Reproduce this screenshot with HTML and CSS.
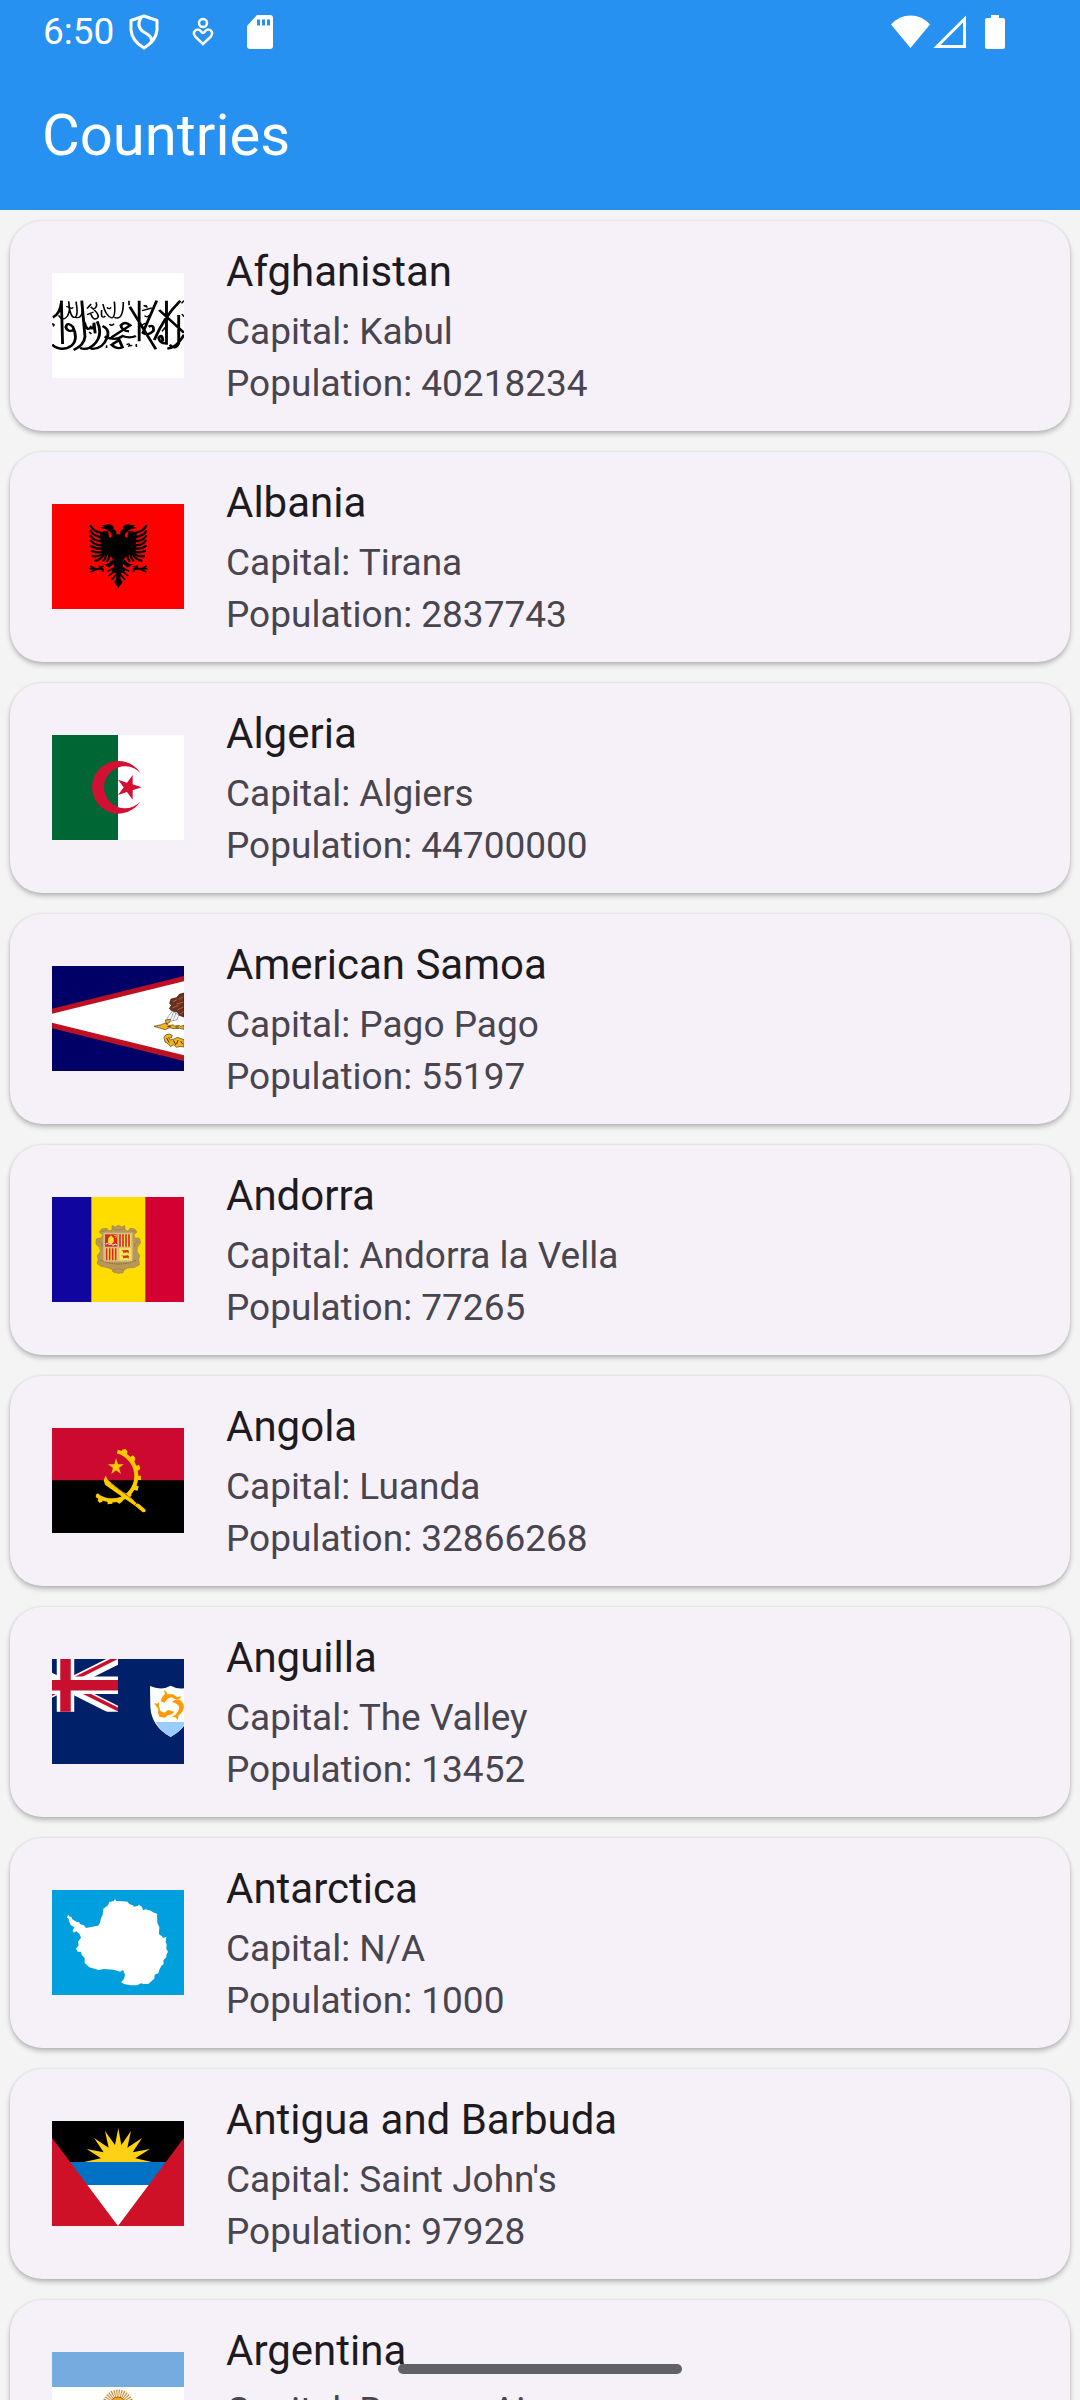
FILE: index.html
```html
<!DOCTYPE html>
<html lang="en">
<head>
<meta charset="utf-8">
<meta name="viewport" content="width=device-width, initial-scale=1">
<title>Countries</title>
<link rel="stylesheet" href="styles.css">
</head>
<body>
<div class="app">
  <header class="header">
    <div class="status">
      <div class="status-side">
        <time class="clock">6:50</time>
        <svg class="icon" width="30" height="36" viewBox="0 0 30 36" fill="none" stroke="#fff" stroke-width="3" stroke-linejoin="round"><path d="M15 2 2 6.500V16Q3 27 15 34Q27 27 28 16V6.500Z"/><path d="M12 3.500C9 9 9 14 14 17.500C20 21 24 23 22 29"/></svg>
        <svg class="icon" width="22" height="30" viewBox="0 0 22 30" fill="none" stroke="#fff" stroke-width="2.500"><circle cx="11" cy="6" r="4"/><path d="M11 27 3.500 20C0 15.500 3 12.500 6 12.500C9 12.500 9 16 11 16C13 16 13 12.500 16 12.500C19 12.500 22 15.500 18.500 20Z"/></svg>
        <svg class="icon" width="26" height="34" viewBox="0 0 26 34"><path fill="#fff" d="M10 0H23Q26 0 26 3V31Q26 34 23 34H3Q0 34 0 31V11Z"/><path fill="#2691f0" d="M10 4.500h3v6h-3zM15 4.500h3v6h-3zM20 4.500h3v6h-3z"/></svg>
      </div>
      <div class="status-side status-right">
        <svg class="signals" width="76" height="34" viewBox="0 0 76 34"><path fill="#fff" d="M0 9.500Q8 .5 19.500 .5T39 9.500L19.500 33Z"/><path fill="none" stroke="#fff" stroke-width="3" d="M46 31.500H73.500V4Z"/></svg>
        <svg width="20" height="34" viewBox="0 0 20 34"><path fill="#fff" d="M6 0h8v3h4q2 0 2 2v27q0 2-2 2H2q-2 0-2-2V5q0-2 2-2h4z"/></svg>
      </div>
    </div>
    <h1 class="title">Countries</h1>
  </header>
  <main class="content">
    <ul class="list">
      <li class="card">
        <svg class="flag" viewBox="127 219 324 315" preserveAspectRatio="none">
          <path fill="#fff" d="M127 219h324v315H127z"/>
          <g fill="none" stroke="#000" stroke-width="7">
            <path d="M150 302 153 432M151 302Q146 345 129 352M127 434Q150 458 176 436Q192 416 178 380Q164 364 161 382Q164 398 183 390M200 302 208 410Q206 436 180 450M206 366Q213 396 222 382Q230 392 230 368L233 400M238 364Q254 408 228 436Q214 452 196 444M251 378Q270 388 262 414Q250 450 222 446"/>
            <path d="M256 410Q284 424 300 408Q318 416 333 408M273 412Q306 386 319 376Q306 362 296 376Q298 392 316 394M276 432 292 420 300 442Q286 450 271 432M341 302V424M318 320 382 448M384 302 350 398Q362 410 376 392Q378 372 364 380M408 302V434M442 302Q402 350 378 420M390 330 451 398M438 345V430Q430 452 416 434M399 424Q398 398 389 414Q392 432 410 430M410 446Q434 442 451 404"/>
          </g>
          <g fill="none" stroke="#000" stroke-width="4">
            <path d="M168 304Q171 356 184 352Q192 346 186 305M184 352Q200 358 202 330M162 320Q176 318 165 348Q154 366 143 346M235 307Q240 322 228 328M222 320Q244 342 240 352Q230 366 222 342M252 312Q258 348 274 354Q284 350 280 305M280 352Q302 364 302 306M258 348Q246 360 249 330"/>
            <path d="M171 322q3 6 8 0M262 322q5 8 10 0M213 326l10-14M316 302v14M352 316q14 10 4 0M348 332l24-8M354 347q7 8 12-2M268 372q6 8 11-1M310 434q10-6 6 4l8-2M334 432v9M127 372q9 0 2 7M445 310l6-8M446 342l5 8M213 344l16-8M218 396l6 6M344 378l13-9M261 436v8M409 376l-12 18"/>
          </g>
        </svg>
        <div class="info"><h2 class="name">Afghanistan</h2><p class="detail">Capital: Kabul</p><p class="detail">Population: 40218234</p></div>
      </li>
      <li class="card">
        <svg class="flag" viewBox="36 42 396 315">
          <path fill="red" d="M36 42h396v315H36z"/>
          <g id="eagle-half">
            <path d="M236 294 222 277 229 265 228 250 214 244 222 230 219 208 208 196 184 194 180 130Q190 121 204 124L208 143Q220 142 214 130L198 118 192 116 180 114 192 109 184 106 199 104Q215 100 222 112L220 118Q232 120 229 134L236 132ZM190 222Q206 226 216 208L223 219 208 233Z"/>
            <g fill="none" stroke="#000" stroke-width="7" stroke-linecap="round"><path d="M152 108Q160 124 182 128M152 124Q162 139 184 141M152 138Q162 154 186 153M153 152Q164 168 188 165M153 168Q168 180 190 174M155 183Q170 190 190 184M158 198Q174 202 190 190M166 212Q180 210 190 196M190 212Q197 207 198 195M202 213Q208 206 208 196"/><path stroke-width="5" d="M204 243 222 234M207 257 226 242M216 268 230 252M152 229 166 236 190 237M153 245 190 229M150 236h18M178 228l12 16"/></g>
          </g>
          <use href="#eagle-half" transform="matrix(-1 0 0 1 470 0)"/>
        </svg>
        <div class="info"><h2 class="name">Albania</h2><p class="detail">Capital: Tirana</p><p class="detail">Population: 2837743</p></div>
      </li>
      <li class="card">
        <svg class="flag" viewBox="36 45 396 315">
          <path fill="#fff" d="M36 45h396v315H36z"/><path fill="#006633" d="M36 45h198v315H36z"/>
          <path fill="#d21034" d="M302 160A79 79 0 1 0 302 244A63 63 0 1 1 302 160ZM305 202 278 193 278 165 261 188 234 179 251 202 234 225 261 216 278 239 278 211Z"/>
        </svg>
        <div class="info"><h2 class="name">Algeria</h2><p class="detail">Capital: Algiers</p><p class="detail">Population: 44700000</p></div>
      </li>
      <li class="card">
        <svg class="flag" viewBox="36 48 396 315">
          <path fill="#006" d="M36 48h396v315H36z"/><path fill="#bd1021" d="M36 176 432 78V333L36 235Z"/><path fill="#fff" d="M36 191 432 94V316L36 218Z"/>
          <path fill="#6b301c" stroke="#2b130c" stroke-width="2" d="M432 129 418 133 410 143 393 147 389 160 394 166 388 176 398 184 412 186 418 196 432 201Z"/>
          <path fill="none" stroke="#a9623f" stroke-width="3" d="M398 155l14-6M397 174l18-8M412 180l18-9M416 148l14-8M410 162l20-6M421 191l10-6"/>
          <path fill="#fff" stroke="#777" stroke-width="2" d="M397 184 386 197 379 211 390 214 411 209 416 195Z"/><path fill="none" stroke="#777" stroke-width="2" d="M400 188l-8 20M408 189l-8 20"/>
          <g fill="#f2b51d" stroke="#4b3510" stroke-width="2"><path d="M376 210 392 208 388 218 379 222ZM342 229 364 224 376 219 386 226 400 225 404 228 418 226 421 229 432 226V238L418 235 402 236 388 233 376 239 362 235Z"/><path d="M372 262Q374 253 388 252L397 256 394 264 386 263 390 270 402 267 412 262 426 267 432 269V291L420 289 410 292 400 284 392 290 384 281 375 276Z"/></g>
          <path fill="none" stroke="#4b3510" stroke-width="3" d="M380 264l8 14M400 271l8 14M414 270l-4 12M422 273l6 10M382 230h10M407 231h9"/>
        </svg>
        <div class="info"><h2 class="name">American Samoa</h2><p class="detail">Capital: Pago Pago</p><p class="detail">Population: 55197</p></div>
      </li>
      <li class="card">
        <svg class="flag" viewBox="36 51 396 315">
          <path fill="#fd0" d="M36 51h396v315H36z"/><path fill="#10069f" d="M36 51h118v315H36z"/><path fill="#d50032" d="M316 51h116v315H316z"/>
          <path fill="#b8975a" stroke="#a07d45" stroke-width="2" d="M216 137 226 141 235 136 245 141 254 137 255 149 264 154 270 145 284 147 291 156 281 165 285 175 297 174 302 188 292 202 291 214 299 227 296 237 298 254 284 262 262 264 252 270 249 278 235 280 219 276 216 268 203 263 181 258 171 250 175 239 172 227 181 215 179 203 168 192 169 177 182 174 189 166 178 156 185 147 200 145 207 153 216 150Z"/>
          <path fill="#d6bd83" d="M190 158h88v87h-88z"/>
          <path fill="#d52b1e" d="M195 163h37v37h-37z"/><path fill="#ffe45a" d="M237 163h36v37h-36zM196 205h36v36h-36zM238 205h36v36h-36z"/>
          <path stroke="#d52b1e" stroke-width="5" d="M240 163v37M249 163v37M258 163v37M267 163v37M200 205v36M209 205v36M218 205v36M227 205v36"/>
          <path fill="#ffdc32" d="M213 166 221 175 221 187 213 193 204 188 205 175Z"/><path fill="none" stroke="#fff" stroke-width="3" d="M197 192q8-5 10 2 8-5 12 2 7-7 12-1"/><path fill="none" stroke="#f3b02d" stroke-width="3" d="M222 167l8-1-3 8"/>
          <path fill="#c93720" d="M243 209l6 2 15-1 3 3-2 9-3-5-10 1-2 2-1-6zM243 225l6 2 15-1 3 3-2 9-3-5-10 1-2 2-1-6z"/>
          <path fill="none" stroke="#806137" stroke-width="3" stroke-dasharray="4 3" d="M181 240Q207 252 235 252T290 240"/><path fill="none" stroke="#9b7945" stroke-width="2" d="M175 184q14 4 10 16M295 184q-14 4-9 17M216 145q18 10 38 0M219 270q16-8 31 0M184 155l16-4M286 154l-15-2"/>
        </svg>
        <div class="info"><h2 class="name">Andorra</h2><p class="detail">Capital: Andorra la Vella</p><p class="detail">Population: 77265</p></div>
      </li>
      <li class="card">
        <svg class="flag" viewBox="36 39 396 315">
          <path fill="#000" d="M36 39h396v315H36z"/><path fill="#cc092f" d="M36 39h396v157H36z"/>
          <path fill="none" stroke="#ffcb00" stroke-width="12" d="M232 110A75 75 0 0 1 245 251Q205 265 170 241"/>
          <g fill="#ffcb00"><path d="M246 104l11-2 6 9-7 11-12-4zM271 126l8-5 7 8-2 10-10 2zM287 153l10-4 4 10-3 7-10 1zM294 182h9v13h-10zM286 211l10 3-3 13-14-3zM263 233l13 6-7 9-12-5zM232 251l12-6 5 12-10 9-7-3zM202 255h15v11l-14 2zM177 245l12 4-2 12-9 2-5-6zM167 239l7-4 7 8-11 4z"/>
          <path d="M228 130 234 148 252 148 237 158 243 177 228 166 214 177 219 159 204 148 223 148Z"/>
          <path d="M197 182 203 194 238 223 264 240 288 263 298 268 317 284 316 291 308 292 287 274 270 262 230 234 195 209 191 195Z"/></g>
          <path stroke="#3b2d00" stroke-width="3" stroke-dasharray="3 2" d="M214 206 272 249M285 270l8-8"/>
        </svg>
        <div class="info"><h2 class="name">Angola</h2><p class="detail">Capital: Luanda</p><p class="detail">Population: 32866268</p></div>
      </li>
      <li class="card">
        <svg class="flag" viewBox="36 42 396 315">
          <defs><clipPath id="canton"><path d="M36 42h198v158H36z"/></clipPath><clipPath id="saltire"><path d="M30 15h30v15zv15h-30zh-30v-15zv-15h30z"/></clipPath></defs>
          <path fill="#00206a" d="M36 42h396v315H36z"/>
          <g clip-path="url(#canton)"><g transform="translate(-81 42) scale(5.25)"><path stroke="#fff" stroke-width="6" d="M0 0 60 30M60 0 0 30"/><path stroke="#c8102e" stroke-width="4" clip-path="url(#saltire)" d="M0 0 60 30M60 0 0 30"/><path stroke="#fff" stroke-width="10" d="M30 0v31M0 15h60"/><path stroke="#c8102e" stroke-width="6" d="M30 0v31M0 15h60"/></g></g>
          <path fill="#fff" d="M330 123Q364 138 392 122Q420 138 454 123V185Q450 244 392 276Q334 244 331 185Z"/><path fill="#9cf" d="M347 231H437Q422 260 392 275Q362 260 347 231Z"/>
          <g fill="#ff9b00"><path d="M371 135 379 140 382 148 399 148 411 156 425 154 417 162 404 162 394 157 383 161 373 173 362 169 366 157 375 146Z"/><path d="M409 163Q429 163 432 186Q429 202 416 211L413 225 406 216 395 217 408 208Q419 195 417 184L410 177 396 170Z"/><path d="M342 175 352 176 357 171 357 185 362 199 373 203 384 195 403 200 396 208 383 211 374 218 358 215 354 203 355 192Z"/></g>
        </svg>
        <div class="info"><h2 class="name">Anguilla</h2><p class="detail">Capital: The Valley</p><p class="detail">Population: 13452</p></div>
      </li>
      <li class="card">
        <svg class="flag" viewBox="36 45 396 315">
          <path fill="#009fdd" d="M36 45h396v315H36z"/>
          <path fill="#fff" d="M84 119 88 124 95 127 96 132 109 140 117 142 121 148 132 151 138 159 157 155 174 152 180 143 183 130 188 119 190 101 204 91 208 81 221 78 225 72 229 78 248 79 262 80 269 88 279 91 281 95 293 93 297 89 306 96 309 106 317 103 332 107 342 113 351 116 352 143 358 157 357 178 366 184 369 189 379 185 377 200 380 209 379 221 384 230 379 240 379 247 370 256 371 268 364 272 358 285 355 295 344 299 343 311 335 318 326 326 310 327 303 325 291 331 272 331 252 327 243 322 252 312 255 299 249 285 240 290 221 284 192 282 176 285 148 277 134 264 134 249 125 240 123 230 113 230 108 221 116 211 114 200 123 188 119 178 109 169 101 173 98 166 103 157 92 150 87 139 86 131 81 128Z"/>
        </svg>
        <div class="info"><h2 class="name">Antarctica</h2><p class="detail">Capital: N/A</p><p class="detail">Population: 1000</p></div>
      </li>
      <li class="card">
        <svg class="flag" viewBox="36 48 396 315">
          <path fill="#000" d="M36 48h396v315H36z"/><path fill="#0072c6" d="M36 171h396v69H36z"/><path fill="#fff" d="M36 240h396v123H36z"/>
          <path fill="#fcd116" d="M132 171 183 160 140 132 191 142 162 99 206 128 195 78 225 120 235 69 244 120 273 78 262 128 306 99 278 142 330 132 286 160 336 171Z"/>
          <path fill="#ce1126" d="M36 98 234 363H36ZM432 98 234 363H432Z"/>
        </svg>
        <div class="info"><h2 class="name">Antigua and Barbuda</h2><p class="detail">Capital: Saint John's</p><p class="detail">Population: 97928</p></div>
      </li>
      <li class="card">
        <svg class="flag" viewBox="0 0 132 105">
          <path fill="#74acdf" d="M0 0h132v105H0z"/><path fill="#fff" d="M0 35h132v35H0z"/>
          <circle cx="66" cy="53" r="11" fill="none" stroke="#c98a2e" stroke-width="9" stroke-dasharray="1 1"/><circle cx="66" cy="53" r="8" fill="#f0a51f" stroke="#a8651b"/>
        </svg>
        <div class="info"><h2 class="name">Argentina</h2><p class="detail">Capital: Buenos Aires</p><p class="detail">Population: 45376763</p></div>
      </li>
    </ul>
  </main>
  <div class="home-bar"></div>
</div>
</body>
</html>
```
FILE: styles.css
```css
* {
  box-sizing: border-box;
}

body,
h1,
h2,
p,
ul {
  margin: 0;
  padding: 0;
  font-weight: 400;
}

body {
  background: #f4f4f4;
  font-family: Roboto, sans-serif;
}

svg {
  display: block;
  flex: none;
}

.app {
  display: flex;
  flex-direction: column;
  height: 100vh;
}

.header {
  flex: none;
  background: #2691f0;
  color: #fff;
}

.status {
  display: flex;
  justify-content: space-between;
  align-items: center;
  height: 63px;
  padding: 0 75px 0 43px;
}

.status-side {
  display: flex;
  align-items: center;
  gap: 33px;
}

.status-right {
  gap: 18px;
}

.clock {
  margin-right: -18px;
  font-size: 37px;
  line-height: 63px;
}

.title {
  padding: 33px 42px 36px;
  font-size: 58px;
  line-height: 78px;
}

.content {
  flex: 1;
  min-height: 0;
  overflow-y: auto;
  scrollbar-width: none;
}

.list {
  display: flex;
  flex-direction: column;
  gap: 21px;
  padding: 11px 10px;
  list-style: none;
}

.card {
  display: flex;
  align-items: center;
  gap: 42px;
  min-height: 210px;
  padding: 21px 42px;
  border-radius: 32px;
  background: #f6f1f9;
  box-shadow: 0 3px 5px rgba(0, 0, 0, 0.24), 0 0 3px rgba(0, 0, 0, 0.1);
}

.flag {
  width: 132px;
  height: 105px;
  margin-bottom: 1px;
}

.info {
  flex: 1;
  min-width: 0;
}

.name {
  margin-bottom: 6px;
  color: #1d1b20;
  font-size: 42px;
  line-height: 57px;
}

.detail {
  color: #49454f;
  font-size: 37px;
  line-height: 52px;
}

.home-bar {
  position: fixed;
  bottom: 26px;
  left: 50%;
  width: 284px;
  height: 10px;
  border-radius: 5px;
  background: #626165;
  transform: translateX(-50%);
}
```
